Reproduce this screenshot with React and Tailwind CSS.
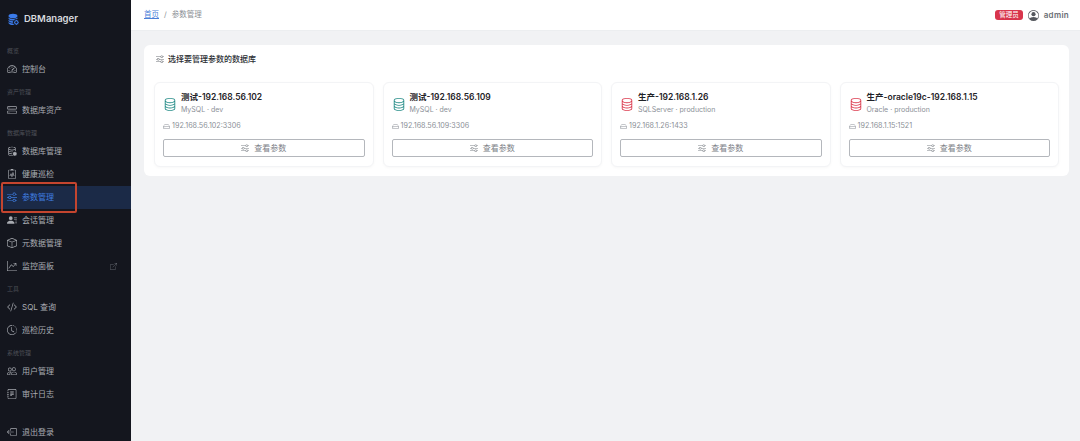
import React from "react";
import {
  BsSpeedometer2,
  BsHddStack,
  BsDatabaseGear,
  BsClipboard2Pulse,
  BsSliders,
  BsPersonLinesFill,
  BsBox,
  BsGraphUpArrow,
  BsCodeSlash,
  BsClockHistory,
  BsPeople,
  BsJournalText,
  BsBoxArrowLeft,
  BsDatabase,
  BsDatabaseFillGear,
  BsHdd,
  BsBoxArrowUpRight,
  BsPersonCircle,
} from "react-icons/bs";

const menu = [
  { label: "概览", items: [{ name: "控制台", icon: BsSpeedometer2 }] },
  { label: "资产管理", items: [{ name: "数据库资产", icon: BsHddStack }] },
  {
    label: "数据库管理",
    items: [
      { name: "数据库管理", icon: BsDatabaseGear },
      { name: "健康巡检", icon: BsClipboard2Pulse },
      { name: "参数管理", icon: BsSliders, active: true },
      { name: "会话管理", icon: BsPersonLinesFill },
      { name: "元数据管理", icon: BsBox },
      { name: "监控面板", icon: BsGraphUpArrow, external: true },
    ],
  },
  {
    label: "工具",
    items: [
      { name: "SQL 查询", icon: BsCodeSlash },
      { name: "巡检历史", icon: BsClockHistory },
    ],
  },
  {
    label: "系统管理",
    items: [
      { name: "用户管理", icon: BsPeople },
      { name: "审计日志", icon: BsJournalText },
    ],
  },
];

const dbs = [
  { title: "测试-192.168.56.102", sub: "MySQL · dev", addr: "192.168.56.102:3306", prod: false },
  { title: "测试-192.168.56.109", sub: "MySQL · dev", addr: "192.168.56.109:3306", prod: false },
  { title: "生产-192.168.1.26", sub: "SQLServer · production", addr: "192.168.1.26:1433", prod: true },
  { title: "生产-oracle19c-192.168.1.15", sub: "Oracle · production", addr: "192.168.1.15:1521", prod: true },
];

function NavItem({ item }) {
  const Icon = item.icon;
  return (
    <div
      className={
        "flex h-[23px] items-center pl-[7px] pr-[14px] text-[8px] " +
        (item.active ? "bg-[#1b2a47] text-[#3f7de0]" : "text-[#a9acb2]")
      }
    >
      <Icon size={10} className="shrink-0" />
      <span className="ml-[5px] flex-1">{item.name}</span>
      {item.external && <BsBoxArrowUpRight size={7} className="text-[#62666e]" />}
    </div>
  );
}

function DbCard({ db }) {
  return (
    <div className="flex-1 rounded-md border border-[#f3f4f6] bg-white px-[8px] pt-[8px] shadow-[0_1px_3px_rgba(0,0,0,0.03)]">
      <div className="flex items-center">
        <BsDatabase size={14} className={"shrink-0 " + (db.prod ? "text-[#dc3d50]" : "text-[#2a8f8a]")} />
        <div className="ml-[4px]">
          <div className="text-[8.5px] font-semibold leading-[13px] text-[#1f2328]">{db.title}</div>
          <div className="text-[7px] leading-[12px] text-[#8b9097]">{db.sub}</div>
        </div>
      </div>
      <div className="mt-[4px] flex items-center text-[7.2px] leading-[12px] text-[#8b9097]">
        <BsHdd size={7} className="mr-[2px]" />
        {db.addr}
      </div>
      <button className="mb-[9px] mt-[7px] flex h-[18px] w-full items-center justify-center rounded-[2px] border border-[#b4b7bc] bg-white text-[8px] text-[#7d8187]">
        <BsSliders size={8} className="mr-[5px]" />
        查看参数
      </button>
    </div>
  );
}

export default function App() {
  return (
    <div className="relative flex h-screen overflow-hidden bg-[#f1f2f4] font-['Inter','Noto_Sans_CJK_SC',sans-serif]">
      <aside className="flex w-[131px] shrink-0 flex-col bg-[#14161e]">
        <div className="flex h-[39.5px] shrink-0 items-center pb-[2px] pl-[7px]">
          <BsDatabaseFillGear size={12} className="text-[#3b7bea]" />
          <span className="ml-[5px] text-[9.5px] font-semibold text-[#d8dade]">DBManager</span>
        </div>
        <nav>
          {menu.map((group) => (
            <div key={group.label}>
              <div className="flex h-[18px] items-end pb-[2px] pl-[7px] text-[6px] leading-[10px] text-[#4d5058]">
                {group.label}
              </div>
              {group.items.map((item) => (
                <NavItem key={item.name} item={item} />
              ))}
            </div>
          ))}
        </nav>
        <div className="mt-auto mb-[-2px]">
          <NavItem item={{ name: "退出登录", icon: BsBoxArrowLeft }} />
        </div>
      </aside>

      <div className="flex min-w-0 flex-1 flex-col">
        <header className="flex h-[31px] items-center justify-between border-b border-[#eceef0] bg-white pl-[13px] pr-[11px] text-[7.5px]">
          <div className="flex items-center text-[#8b8f95]">
            <span className="text-[#4a80d8] underline">首页</span>
            <span className="mx-[5px]">/</span>
            <span>参数管理</span>
          </div>
          <div className="flex items-center">
            <span className="rounded-[3px] bg-[#d8354c] px-[4px] text-[6.5px] leading-[10px] text-white">管理员</span>
            <BsPersonCircle size={11} className="ml-[5px] text-[#55585e]" />
            <span className="ml-[5px] text-[8px] font-semibold tracking-[0.3px] text-[#6a6e74]">admin</span>
          </div>
        </header>

        <main className="pl-[13px] pr-[11px] pt-[14px]">
          <section className="rounded-md bg-white px-[10px] pb-[9px]">
            <div className="flex h-[37px] items-center pb-[12px] pt-[2px] text-[8px] font-medium text-[#2a2d32]">
              <BsSliders size={8} className="ml-[2px] mr-[4px] text-[#6f7278]" />
              选择要管理参数的数据库
            </div>
            <div className="flex gap-[9px]">
              {dbs.map((db) => (
                <DbCard key={db.title} db={db} />
              ))}
            </div>
          </section>
        </main>
      </div>

      {/* 红色标注框 */}
      <div className="absolute left-[1px] top-[182px] h-[31px] w-[76px] rounded-[2px] border-2 border-[#c4452f]" />
    </div>
  );
}
